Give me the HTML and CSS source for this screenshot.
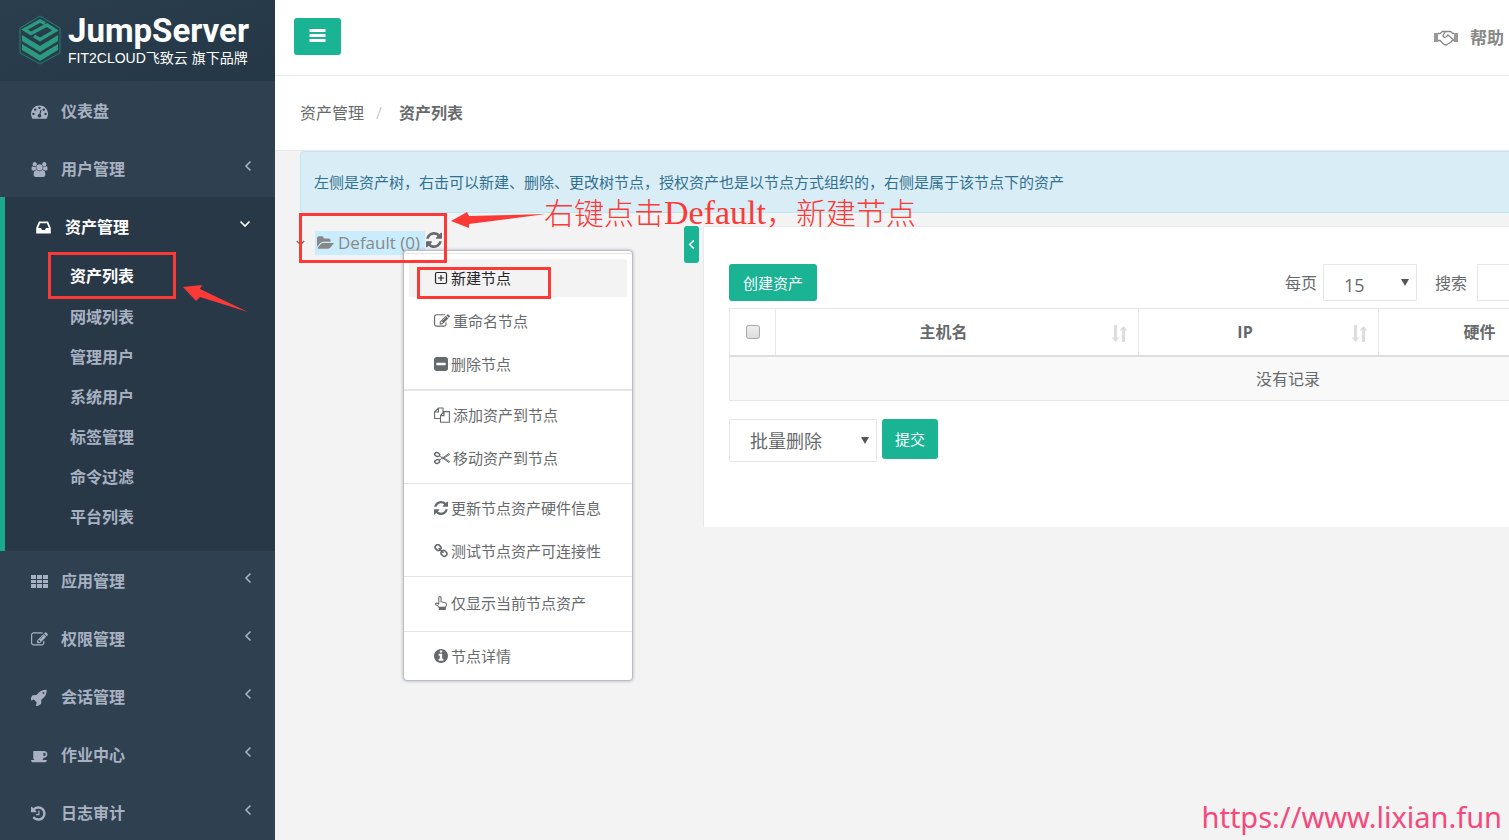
FILE: index.html
```html
<!doctype html>
<html lang="zh-CN">
	<head>
		<meta charset="utf-8">
		<meta name="viewport" content="width=device-width,initial-scale=1.0">
		<title>资产列表 - JumpServer</title>
		<link rel="stylesheet" href="styles.css">
	</head>
	<body>
		<!-- shared icons -->
		<svg class="sprite" aria-hidden="true">
			<symbol id="angle" viewBox="0 0 10 12"><path d="M7.500 1.500L3 6l4.500 4.500" fill="none" stroke="currentColor" stroke-width="1.600"/></symbol>
			<symbol id="edit" viewBox="0 0 1792 1792"><path d="M888 1184l116-116-152-152-116 116v56h96v96h56zm440-720q-16-16-33 1l-350 350q-17 17-1 33t33-1l350-350q17-17 1-33zm80 594v190q0 119-84.500 203.500t-203.500 84.500h-832q-119 0-203.500-84.500t-84.500-203.500v-832q0-119 84.500-203.500t203.500-84.500h832q63 0 117 25 15 7 18 23 3 17-9 29l-49 49q-14 14-32 8-23-6-45-6h-832q-66 0-113 47t-47 113v832q0 66 47 113t113 47h832q66 0 113-47t47-113v-126q0-13 9-22l64-64q15-15 35-7t20 29zm-96-738l288 288-672 672h-288v-288zm444 132l-92 92-288-288 92-92q28-28 68-28t68 28l152 152q28 28 28 68t-28 68z"/></symbol>
			<symbol id="refresh" viewBox="128 128 1536 1536"><path d="M1639 1056q0 5-1 7-64 268-268 434.500t-478 166.500q-146 0-282.500-55t-243.500-157l-129 129q-19 19-45 19t-45-19-19-45v-448q0-26 19-45t45-19h448q26 0 45 19t19 45-19 45l-137 137q71 66 161 102t187 36q134 0 250-65t186-179q11-17 53-117 8-23 30-23h192q13 0 22.500 9.500t9.500 22.500zm25-800v448q0 26-19 45t-45 19h-448q-26 0-45-19t-19-45 19-45l138-138q-148-137-349-137-134 0-250 65t-186 179q-11 17-53 117-8 23-30 23h-199q-13 0-22.500-9.500t-9.500-22.500v-7q65-268 270-434.500t480-166.500q146 0 284 55.500t245 156.500l130-129q19-19 45-19t45 19 19 45z"/></symbol>
			<symbol id="sort" viewBox="0 0 16 18"><path d="M2.500 0h3v12.500h2.500L4 17 0 12.500h2.500zM12 1l4 4.500h-2.500V17h-3V5.500H8z"/></symbol>
		</svg>

		<div class="wrapper">
			<div class="sidebar">
				<a class="brand" href="#">
					<svg class="logo" viewBox="0 0 42 50" aria-hidden="true">
						<path d="M21 1L41 13v25L21 49 1 38V13z" fill="none" stroke="#23806f"/>
						<path d="M26 8.500l-5-2.500L5.500 14.500 12 18.500l16-8.500 8.500 5.500L21 24.500l-6-3.500" fill="none" stroke="#2b9a80" stroke-width="3.400"/>
						<path d="M3 20l18 11 18-11v6L21 37 3 26zM3 29l18 11 18-11v6L21 46 3 35z" fill="#2b9a80"/>
					</svg>
					<span class="brand-text">
						<span class="brand-name">JumpServer</span>
						<span class="brand-sub">FIT2CLOUD飞致云 旗下品牌</span>
					</span>
				</a>
				<nav>
					<ul class="menu">
						<li><a href="#"><svg class="icon" viewBox="0 0 1792 1792"><path d="M384 1152q0-53-37.500-90.500t-90.500-37.500-90.500 37.500-37.500 90.500 37.500 90.500 90.500 37.500 90.500-37.500 37.500-90.500zm192-448q0-53-37.500-90.500t-90.500-37.500-90.500 37.500-37.500 90.500 37.500 90.500 90.500 37.500 90.500-37.500 37.500-90.500zm428 481l101-382q6-26-7.500-48.500t-38.500-29.500-48 6.500-30 39.500l-101 382q-60 5-107 43.500t-63 98.500q-20 77 20 146t117 89 146-20 89-117q16-60-6-117t-72-91zm660-33q0-53-37.500-90.500t-90.500-37.500-90.500 37.500-37.500 90.500 37.500 90.500 90.500 37.500 90.500-37.500 37.500-90.500zm-640-640q0-53-37.500-90.500t-90.500-37.500-90.500 37.500-37.500 90.500 37.500 90.500 90.500 37.500 90.500-37.500 37.500-90.500zm448 192q0-53-37.500-90.500t-90.500-37.500-90.500 37.500-37.500 90.500 37.500 90.500 90.500 37.500 90.500-37.500 37.500-90.500zm320 448q0 261-141 483-19 29-54 29h-1402q-35 0-54-29-141-221-141-483 0-182 71-348t191-286 286-191 348-71 348 71 286 191 191 286 71 348z"/></svg><span>仪表盘</span></a></li>
						<li><a href="#"><svg class="icon" viewBox="0 0 2048 1792"><path d="M657 896q-162 5-265 128h-134q-82 0-138-40.500t-56-118.500q0-353 124-353 6 0 43.500 21t97.500 42.500 119 21.500q67 0 133-23-5 37-5 66 0 159 93 293zm1071 637q0 120-73 189.500t-194 69.500h-874q-121 0-194-69.500t-73-189.500q0-53 3.500-103.500t14-109 26.500-108.500 43-97.500 62-81 85.500-53.500 111.500-20q10 0 43 21.500t73 48 107 48 135 21.500 135-21.500 107-48 73-48 43-21.500q61 0 111.500 20t85.500 53.500 62 81 43 97.500 26.500 108.500 14 109 3.500 103.500zm-1024-1277q0 106-75 181t-181 75-181-75-75-181 75-181 181-75 181 75 75 181zm704 384q0 159-112.500 271.500t-271.500 112.500-271.500-112.500-112.500-271.500 112.500-271.500 271.500-112.500 271.500 112.500 112.500 271.500zm576 225q0 78-56 118.500t-138 40.500h-134q-103-123-265-128 93-134 93-293 0-29-5-66 66 23 133 23 59 0 119-21.500t97.500-42.500 43.500-21q124 0 124 353zm-128-609q0 106-75 181t-181 75-181-75-75-181 75-181 181-75 181 75 75 181z"/></svg><span>用户管理</span><svg class="angle"><use href="#angle"/></svg></a></li>
						<li class="active">
							<a href="#"><svg class="icon" viewBox="0 0 1792 1792"><path d="M1151 960h316q-1-3-2.500-8t-2.500-8l-212-496h-708l-212 496q-1 2-2.500 8t-2.500 8h316l95 192h320zm513 30v482q0 26-19 45t-45 19h-1408q-26 0-45-19t-19-45v-482q0-62 25-123l238-552q10-25 36.500-42t52.500-17h832q26 0 52.500 17t36.500 42l238 552q25 61 25 123z"/></svg><span>资产管理</span><svg class="angle open"><use href="#angle"/></svg></a>
							<ul class="submenu">
								<li><a class="selected" href="#">资产列表</a></li>
								<li><a href="#">网域列表</a></li>
								<li><a href="#">管理用户</a></li>
								<li><a href="#">系统用户</a></li>
								<li><a href="#">标签管理</a></li>
								<li><a href="#">命令过滤</a></li>
								<li><a href="#">平台列表</a></li>
							</ul>
						</li>
						<li><a href="#"><svg class="icon" viewBox="0 0 17 17"><path d="M0 2h5v4H0zm6 0h5v4H6zm6 0h5v4h-5zM0 7h5v3H0zm6 0h5v3H6zm6 0h5v3h-5zM0 11h5v4H0zm6 0h5v4H6zm6 0h5v4h-5z"/></svg><span>应用管理</span><svg class="angle"><use href="#angle"/></svg></a></li>
						<li><a href="#"><svg class="icon"><use href="#edit"/></svg><span>权限管理</span><svg class="angle"><use href="#angle"/></svg></a></li>
						<li><a href="#"><svg class="icon" viewBox="128 64 1664 1664"><path d="M1440 448q0-40-28-68t-68-28-68 28-28 68 28 68 68 28 68-28 28-68zm224-288q0 249-75.500 430.500t-253.500 360.500q-81 80-195 176l-20 379q-2 16-16 26l-384 224q-7 4-16 4-12 0-23-9l-64-64q-13-14-8-32l85-276-281-281-276 85q-3 1-9 1-14 0-23-9l-64-64q-17-19-5-39l224-384q10-14 26-16l379-20q96-114 176-195 188-187 358-258t431-71q14 0 24 9.500t10 22.500z"/></svg><span>会话管理</span><svg class="angle"><use href="#angle"/></svg></a></li>
						<li><a href="#"><svg class="icon" viewBox="0 0 1920 1792"><path d="M1664 768q0-80-56-136t-136-56h-64v384h64q80 0 136-56t56-136zm-1664 640h1792q0 106-75 181t-181 75h-1280q-106 0-181-75t-75-181zm1856-640q0 159-112.500 271.500t-271.500 112.500h-64v32q0 92-66 158t-158 66h-704q-92 0-158-66t-66-158v-736q0-26 19-45t45-19h1152q159 0 271.500 112.500t112.500 271.500z"/></svg><span>作业中心</span><svg class="angle"><use href="#angle"/></svg></a></li>
						<li><a href="#"><svg class="icon" viewBox="128 0 1792 1792"><path d="M1664 896q0 156-61 298t-164 245-245 164-298 61q-172 0-327-72.500t-264-204.500q-7-10-6.500-22.500t8.500-20.500l137-138q10-9 25-9 16 2 23 12 73 95 179 147t225 52q104 0 198.500-40.500t163.500-109.500 109.500-163.500 40.500-198.500-40.500-198.500-109.500-163.500-163.500-109.500-198.500-40.500q-98 0-188 35.500t-160 101.500l137 138q31 30 14 69-17 40-59 40h-448q-26 0-45-19t-19-45v-448q0-42 40-59 39-17 69 14l130 129q107-101 244.500-156.500t284.500-55.500q156 0 298 61t245 164 164 245 61 298zm-640-288v448q0 14-9 23t-23 9h-320q-14 0-23-9t-9-23v-64q0-14 9-23t23-9h224v-352q0-14 9-23t23-9h64q14 0 23 9t9 23z"/></svg><span>日志审计</span><svg class="angle"><use href="#angle"/></svg></a></li>
					</ul>
				</nav>
			</div>

			<div class="page">
				<header class="topbar">
					<button class="btn btn-bars" type="button" aria-label="菜单"><svg viewBox="0 0 16 14"><path d="M0 0h16v3H0zm0 5h16v3H0zm0 5h16v3H0z"/></svg></button>
					<a class="help" href="#">
						<svg viewBox="0 0 24 16"><path d="M0 3h4v9H0zM20 3h4v9h-4z" fill="#999"/><path d="M4 3.500h2L8.500 1.500h3L9 5.500Q9.500 8 12 7l2-2 5 4.500-1.500 2-2 1.500L12 15l-2-.5-4-4H4M11.500 1.500h5l2.500 2h1M19 10.500h1" fill="none" stroke="#888" stroke-width="1.300"/></svg>
						<span>帮助</span>
					</a>
				</header>

				<div class="heading">
					<ol class="breadcrumb">
						<li><a href="#">资产管理</a></li>
						<li class="current">资产列表</li>
					</ol>
				</div>

				<main class="content">
					<div class="alert">左侧是资产树，右击可以新建、删除、更改树节点，授权资产也是以节点方式组织的，右侧是属于该节点下的资产</div>
					<div class="columns">
						<div class="tree">
							<svg class="tree-switch"><use href="#angle"/></svg>
							<a class="tree-node" href="#"><svg viewBox="0 0 1920 1792"><path d="M1879 952q0 31-31 66l-336 396q-43 51-120.500 86.500t-143.500 35.500h-1088q-34 0-60.500-13t-26.500-43q0-31 31-66l336-396q43-51 120.500-86.500t143.500-35.500h1088q34 0 60.500 13t26.500 43zm-343-344v160h-832q-94 0-197 47.500t-164 119.500l-337 396-5 6q0-4-.5-12.500t-.5-12.500v-960q0-92 66-158t158-66h320q92 0 158 66t66 158v32h544q92 0 158 66t66 158z"/></svg>Default (0)</a>
							<button class="tree-refresh" type="button" aria-label="刷新"><svg><use href="#refresh"/></svg></button>
						</div>
						<button class="toggle" type="button" aria-label="收起"><svg><use href="#angle"/></svg></button>
						<section class="panel">
							<div class="toolbar">
								<button class="btn" type="button">创建资产</button>
								<div class="filters">
									<label for="size">每页</label>
									<span class="select select-size"><select id="size"><option>15</option><option>25</option><option>50</option></select></span>
									<label for="search">搜索</label>
									<input class="search" id="search" type="text">
								</div>
							</div>
							<table class="assets">
								<thead>
									<tr>
										<th class="col-check"><input type="checkbox" aria-label="全选"></th>
										<th class="col-host">主机名<svg class="sort"><use href="#sort"/></svg></th>
										<th class="col-ip">IP<svg class="sort"><use href="#sort"/></svg></th>
										<th class="col-hw">硬件<svg class="sort"><use href="#sort"/></svg></th>
										<th></th>
									</tr>
								</thead>
								<tbody>
									<tr><td colspan="5">没有记录</td></tr>
								</tbody>
							</table>
							<div class="bulk">
								<span class="select select-bulk"><select aria-label="批量操作"><option>批量删除</option></select></span>
								<button class="btn btn-submit" type="button">提交</button>
							</div>
						</section>
					</div>
				</main>
			</div>
		</div>

		<!-- right click menu of the tree -->
		<div class="context">
			<ul>
				<li><a class="hover" href="#"><svg viewBox="0 0 14 14"><path d="M3 1.500h8q1.500 0 1.500 1.500v8q0 1.500-1.500 1.500H3Q1.500 12.500 1.500 11V3Q1.500 1.500 3 1.500zM7 4v6M4 7h6" fill="none" stroke="currentColor" stroke-width="1.200"/></svg>新建节点</a></li>
				<li><a href="#"><svg class="wide"><use href="#edit"/></svg>重命名节点</a></li>
				<li><a href="#"><svg viewBox="128 128 1536 1536"><path d="M1408 960v-128q0-26-19-45t-45-19h-896q-26 0-45 19t-19 45v128q0 26 19 45t45 19h896q26 0 45-19t19-45zm256-544v960q0 119-84.500 203.500t-203.500 84.500h-960q-119 0-203.500-84.500t-84.500-203.500v-960q0-119 84.500-203.500t203.500-84.500h960q119 0 203.500 84.500t84.500 203.500z"/></svg>删除节点</a></li>
			</ul>
			<ul>
				<li><a href="#"><svg class="wide" viewBox="0 0 16 16"><path d="M6 11.500H.600V5L4.500 1H9v4M4.500 1v4H.600M6.500 15.300V8.500L10 4.600h5.400v10.700zM10 4.600v4H6.500" fill="none" stroke="currentColor" stroke-width="1.100"/></svg>添加资产到节点</a></li>
				<li><a href="#"><svg class="wide" viewBox="0 0 16 16"><g fill="none" stroke="currentColor"><ellipse cx="3.200" cy="4.500" rx="2.500" ry="1.800" transform="rotate(25 3.200 4.500)" stroke-width="1.500"/><ellipse cx="3.200" cy="11.500" rx="2.500" ry="1.800" transform="rotate(-25 3.200 11.500)" stroke-width="1.500"/><path d="M5.500 6l3 2 6.500-4.500.5 1L8.500 9M5.500 10l3-2 6.500 4.500.5-1L8.500 7"/></g></svg>移动资产到节点</a></li>
			</ul>
			<ul>
				<li><a href="#"><svg><use href="#refresh"/></svg>更新节点资产硬件信息</a></li>
				<li><a href="#"><svg viewBox="64 64 1664 1664"><path d="M1520 1216q0-40-28-68l-208-208q-28-28-68-28-42 0-72 32 3 3 19 18.500t21.500 21.500 15 19 13 25.500 3.500 27.500q0 40-28 68t-68 28q-15 0-27.500-3.500t-25.500-13-19-15-21.500-21.500-18.500-19q-33 31-33 73 0 40 28 68l206 207q27 27 68 27 40 0 68-26l147-146q28-28 28-67zm-703-705q0-40-28-68l-206-207q-28-28-68-28-39 0-68 27l-147 146q-28 28-28 67 0 40 28 68l208 208q27 27 68 27 42 0 72-31-3-3-19-18.500t-21.500-21.500-15-19-13-25.500-3.500-27.500q0-40 28-68t68-28q15 0 27.500 3.500t25.500 13 19 15 21.500 21.500 18.500 19q33-31 33-73zm895 705q0 120-85 203l-147 146q-83 83-203 83-121 0-204-85l-206-207q-83-83-83-203 0-123 88-209l-88-88q-86 88-208 88-120 0-204-84l-208-208q-84-84-84-204t85-203l147-146q83-83 203-83 121 0 204 85l206 207q83 83 83 203 0 123-88 209l88 88q86-88 208-88 120 0 204 84l208 208q84 84 84 204z"/></svg>测试节点资产可连接性</a></li>
			</ul>
			<ul class="single">
				<li><a href="#"><svg viewBox="0 0 14 16"><path d="M4.500 9.500V2Q4.500.700 5.800.700T7 2v4.500l5 1.200q1.300.300 1.300 1.600 0 2-1.300 3.700H4.800Q3.500 10.500 1 10 .300 8.500 1.600 8.200t2.900 1.300" fill="none" stroke="currentColor" stroke-width="1.200"/><path d="M4.500 12.500h8V16h-8z"/></svg>仅显示当前节点资产</a></li>
			</ul>
			<ul>
				<li><a href="#"><svg viewBox="128 128 1536 1536"><path d="M1152 1376v-160q0-14-9-23t-23-9h-96v-512q0-14-9-23t-23-9h-320q-14 0-23 9t-9 23v160q0 14 9 23t23 9h96v320h-96q-14 0-23 9t-9 23v160q0 14 9 23t23 9h448q14 0 23-9t9-23zm-128-896v-160q0-14-9-23t-23-9h-192q-14 0-23 9t-9 23v160q0 14 9 23t23 9h192q14 0 23-9t9-23zm640 416q0 209-103 385.500t-279.500 279.500-385.500 103-385.500-103-279.500-279.500-103-385.500 103-385.500 279.500-279.500 385.500-103 385.500 103 279.500 279.500 103 385.500z"/></svg>节点详情</a></li>
			</ul>
		</div>

		<!-- tutorial marks -->
		<div class="mark mark-side"></div>
		<div class="mark mark-tree"></div>
		<div class="mark mark-new"></div>
		<svg class="arrow arrow-side" viewBox="0 0 66 28"><path d="M1 2l19-2-2 4 48 23-48-15-4 4z"/></svg>
		<svg class="arrow arrow-tree" viewBox="0 0 95 17"><path d="M0 9L16 0l2 4 77-2-77 10v4z"/></svg>
		<p class="note">右键点击<span>Default</span>，新建节点</p>
		<p class="watermark">https://www.lixian.fun</p>
	</body>
</html>
```
FILE: styles.css
```css
*{
	margin: 0;
	padding: 0;
	box-sizing: border-box;
}
body{
	font-family: "Open Sans", "Noto Sans CJK SC", sans-serif;
	font-size: 16px;
	line-height: 24px;
	color: #676a6c;
	background: #f3f3f4;
	overflow: hidden;
}
a{
	color: inherit;
	text-decoration: none;
}
ul, ol{
	list-style: none;
}
svg{
	fill: currentColor;
	flex: none;
}
button, input, select{
	font: inherit;
	color: inherit;
}
.sprite{
	position: absolute;
	width: 0;
	height: 0;
}
.wrapper{
	display: flex;
	height: 100vh;
}

/**
 * sidebar
 */
.sidebar{
	flex: none;
	width: 275px;
	background: #2f4050;
	color: #a7b1c2;
	font-weight: 600;
	overflow: hidden;
}
.brand{
	display: flex;
	gap: 7px;
	height: 81px;
	padding: 15px 0 0 19px;
	background: linear-gradient(160deg, #2b3e4d, #243746);
	color: white;
}
.logo{
	width: 42px;
	height: 50px;
}
.brand-text{
	display: flex;
	flex-direction: column;
	white-space: nowrap;
}
.brand-name{
	font-family: Roboto, sans-serif;
	font-size: 33px;
	line-height: 32px;
	font-weight: 700;
}
.brand-sub{
	font-family: "Liberation Sans", "Noto Sans CJK SC", sans-serif;
	font-size: 14px;
	line-height: 22px;
	font-weight: 400;
}
.menu > li > a{
	display: flex;
	align-items: center;
	height: 58px;
	padding: 2px 22px 0 31px;
}
.icon{
	width: 17px;
	height: 17px;
	margin-right: 13px;
}
.angle{
	width: 10px;
	height: 12px;
	margin: 0 0 6px auto;
}
.angle.open{
	transform: rotate(-90deg);
}
.menu > .active{
	padding-bottom: 14px;
	border-left: 5px solid #19aa8d;
	background: #293846;
}
.menu > .active > a{
	padding: 2px 25px 0 30px;
	color: white;
}
.submenu a{
	display: block;
	padding-left: 65px;
	line-height: 40px;
}
.submenu .selected{
	color: white;
	line-height: 42px;
}

/**
 * top bar and breadcrumb
 */
.page{
	flex: 1;
	min-width: 0;
}
.topbar{
	display: flex;
	justify-content: space-between;
	align-items: center;
	height: 76px;
	padding: 0 5px 3px 19px;
	border-bottom: 1px solid #e7eaec;
	background: white;
}
.btn{
	height: 37px;
	padding: 0 14px;
	border: 0;
	border-radius: 3px;
	background: #1ab394;
	color: white;
	font-size: 15px;
}
.btn-bars{
	padding: 0 15px;
}
.btn-bars svg{
	display: block;
	width: 17px;
	height: 14px;
}
.help{
	display: flex;
	align-items: center;
	gap: 12px;
	padding-top: 4px;
	color: #888;
	font-size: 17px;
	font-weight: 600;
}
.help svg{
	width: 24px;
	height: 16px;
}
.heading{
	height: 75px;
	padding: 25px;
	border-bottom: 1px solid #e7eaec;
	background: white;
}
.breadcrumb{
	display: flex;
}
.breadcrumb .current{
	font-weight: 600;
}
.breadcrumb .current::before{
	content: "/";
	padding: 0 17px 0 12px;
	color: #ccc;
	font-weight: 400;
}

/**
 * content
 */
.content{
	padding-left: 25px;
}
.alert{
	padding: 18px 13px;
	border: 1px solid #bce8f1;
	border-right: 0;
	border-radius: 4px 0 0 4px;
	background: #d9edf7;
	color: #31708f;
	font-size: 15px;
	white-space: nowrap;
	overflow: hidden;
}
.columns{
	display: flex;
	align-items: flex-start;
	padding-top: 13px;
}
.tree{
	display: flex;
	flex: none;
	align-items: center;
	width: 384px;
	padding-top: 5px;
}
.tree-switch{
	width: 9px;
	height: 10px;
	margin: 0 10px 0 -4px;
	transform: rotate(-90deg);
}
.tree-node{
	display: flex;
	align-items: center;
	gap: 4px;
	padding: 0 5px 0 2px;
	background: #c9edfd;
	color: #888;
	font-size: 17px;
}
.tree-node svg{
	width: 17px;
	height: 16px;
}
.tree-refresh{
	margin: 0 0 6px 1px;
	border: 0;
	background: none;
}
.tree-refresh svg{
	display: block;
	width: 16px;
	height: 16px;
}
.toggle{
	flex: none;
	width: 15px;
	height: 37px;
	margin-right: 4px;
	border: 0;
	border-radius: 3px;
	background: #1ab394;
	color: white;
}
.toggle svg{
	display: block;
	width: 15px;
	height: 11px;
}
.panel{
	flex: 1;
	min-width: 0;
	padding: 37px 0 65px 25px;
	border-top: 1px solid #e7eaec;
	border-left: 1px solid #e7eaec;
	background: white;
	overflow: hidden;
}
.toolbar{
	display: flex;
	justify-content: space-between;
}
.filters{
	display: flex;
	align-items: center;
}
.select{
	position: relative;
}
.select::after{
	content: "";
	position: absolute;
	top: 15px;
	right: 8px;
	border: 4px solid transparent;
	border-top: 7px solid #555;
	border-bottom: 0;
	pointer-events: none;
}
.select select{
	display: block;
	width: 100%;
	padding: 4px 20px 0;
	border: 1px solid #e5e6e7;
	border-radius: 1px;
	background: white;
	font-size: 18px;
	appearance: none;
}
.select-size{
	width: 94px;
	margin: 0 18px 0 6px;
}
.select-size select{
	height: 37px;
}
.search{
	width: 32px;
	height: 37px;
	margin-left: 10px;
	border: 1px solid #e5e6e7;
	border-right: 0;
}
/* wider than the panel, the last columns are cut off */
.assets{
	width: 1118px;
	margin-top: 7px;
	border: 1px solid #e7e7e7;
	border-collapse: collapse;
	table-layout: fixed;
	text-align: center;
}
.assets th{
	position: relative;
	height: 47px;
	padding-right: 27px;
	border-left: 1px solid #e7e7e7;
	border-bottom: 2px solid #ddd;
	font-weight: 700;
}
.assets .col-check{
	width: 46px;
	padding: 0;
}
.col-host{
	width: 363px;
}
.col-ip{
	width: 240px;
}
.col-hw{
	width: 229px;
}
.assets td{
	height: 45px;
	padding-top: 2px;
	background: #f9f9f9;
}
.sort{
	position: absolute;
	right: 10px;
	top: 16px;
	width: 17px;
	height: 18px;
	color: #ddd;
}
.assets input{
	display: block;
	width: 14px;
	height: 14px;
	margin: auto;
	border: 1px solid #aaa;
	border-radius: 3px;
	background: linear-gradient(#eee, #ddd);
	appearance: none;
}
.bulk{
	display: flex;
	align-items: flex-start;
	gap: 5px;
	margin-top: 18px;
}
.select-bulk{
	width: 148px;
}
.select-bulk::after{
	top: 18px;
}
.select-bulk select{
	height: 43px;
	padding-top: 0;
}
.btn-submit{
	height: 40px;
	padding: 0 13px;
}

/**
 * context menu
 */
.context{
	position: absolute;
	left: 403px;
	top: 250px;
	width: 230px;
	padding-top: 2px;
	border: 1px solid #b9bec5;
	border-radius: 4px;
	background: white;
	box-shadow: 0 0 3px rgba(86,96,117,0.5);
	font-size: 15px;
}
.context ul{
	padding: 3px 5px;
	border-top: 1px solid #e5e5e5;
}
.context ul:nth-child(2){
	border-top-width: 2px;
}
.context ul:last-child{
	padding-bottom: 2px;
}
.context .single{
	padding: 5px 5px 6px;
}
.context li{
	padding: 2px 0 3px;
}
.context a{
	display: flex;
	align-items: center;
	gap: 3px;
	height: 38px;
	padding-left: 25px;
	border-radius: 3px;
}
.context .hover{
	background: #f3f3f4;
	color: #262626;
}
.context a svg{
	width: 14px;
	height: 14px;
}
.context a svg.wide{
	width: 16px;
	height: 16px;
}

/**
 * tutorial marks
 */
.mark{
	position: absolute;
	border: 3px solid #fb3a38;
	pointer-events: none;
}
.mark-side{
	left: 48px;
	top: 252px;
	width: 128px;
	height: 47px;
}
.mark-tree{
	left: 299px;
	top: 213px;
	width: 148px;
	height: 50px;
}
.mark-new{
	left: 417px;
	top: 267px;
	width: 134px;
	height: 32px;
}
.arrow{
	position: absolute;
	color: #fb3a38;
}
.arrow-side{
	left: 182px;
	top: 285px;
	width: 66px;
	height: 28px;
}
.arrow-tree{
	left: 451px;
	top: 212px;
	width: 95px;
	height: 17px;
}
.note{
	position: absolute;
	left: 544px;
	top: 191px;
	color: #fb3a38;
	font-family: "Noto Sans CJK SC", sans-serif;
	font-size: 30px;
	font-weight: 300;
	line-height: 40px;
	white-space: nowrap;
}
.note span{
	font-family: "Liberation Serif", serif;
	font-size: 34px;
}
.watermark{
	position: absolute;
	right: 7px;
	bottom: 2px;
	color: #f5497c;
	font-family: "Noto Sans", sans-serif;
	font-size: 29px;
	line-height: 42px;
}
```
